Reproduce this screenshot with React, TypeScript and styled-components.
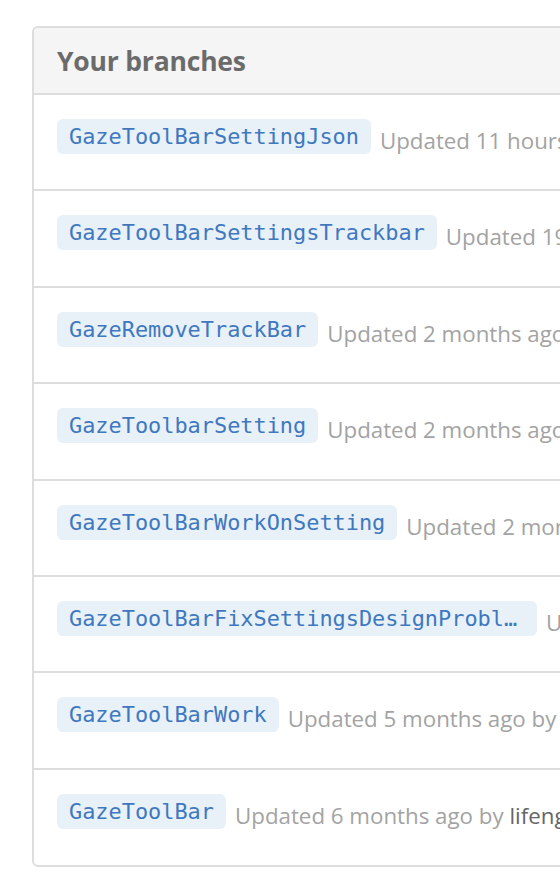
import React from "react";
import styled, { createGlobalStyle } from "styled-components";

const Global = createGlobalStyle`
  html, body { margin: 0; padding: 0; background: #fff; overflow: hidden; }
  body { font-family: "Open Sans", "Noto Sans", sans-serif; }
`;

const Page = styled.div`
  padding: 26px 0 0 32px;
  width: 1200px;
`;

const Box = styled.div`
  width: 1100px;
  border: 2px solid #dddddd;
  border-radius: 6px;
  overflow: hidden;
`;

const Header = styled.div`
  height: 65px;
  background: #f5f5f5;
  border-bottom: 2px solid #dddddd;
  display: flex;
  align-items: center;
  padding-left: 23px;
`;

const Title = styled.h3`
  margin: 0;
  font-family: "Open Sans", "Noto Sans", sans-serif;
  font-weight: 700;
  font-size: 26.5px;
  color: #6b6b6b;
  letter-spacing: -0.2px;
`;

const Row = styled.div<{ $last?: boolean }>`
  height: ${(p) => (p.$last ? "95.5px" : "96.4px")};
  box-sizing: border-box;
  padding: 24px 0 0 23px;
  border-bottom: ${(p) => (p.$last ? "none" : "2px solid #dddddd")};
  display: flex;
  align-items: flex-start;
  white-space: nowrap;
`;

const Branch = styled.span`
  display: inline-block;
  height: 35px;
  line-height: 35px;
  padding: 0 12px;
  border-radius: 6px;
  background: #e8f1f8;
  color: #4078c0;
  font-family: "DejaVu Sans Mono", "Liberation Mono", monospace;
  font-size: 21.9px;
  max-width: 456px;
  overflow: hidden;
  text-overflow: ellipsis;
  box-sizing: content-box;
`;

const Meta = styled.span`
  margin-left: 9px;
  line-height: 44px;
  font-family: "Open Sans", "Noto Sans", sans-serif;
  font-size: 22.3px;
  color: #a3a3a3;
`;

const Author = styled.span`
  color: #666666;
`;

const branches = [
  { name: "GazeToolBarSettingJson", meta: "Updated 11 hours ago by", author: "lifeng" },
  { name: "GazeToolBarSettingsTrackbar", meta: "Updated 19 days ago by", author: "lifeng" },
  { name: "GazeRemoveTrackBar", meta: "Updated 2 months ago by", author: "lifeng" },
  { name: "GazeToolbarSetting", meta: "Updated 2 months ago by", author: "lifeng" },
  { name: "GazeToolBarWorkOnSetting", meta: "Updated 2 months ago by", author: "lifeng" },
  { name: "GazeToolBarFixSettingsDesignProblem", meta: "Updated 3 months ago by", author: "lifeng" },
  { name: "GazeToolBarWork", meta: "Updated 5 months ago by", author: "lifeng" },
  { name: "GazeToolBar", meta: "Updated 6 months ago by", author: "lifeng" },
];

export default function App() {
  return (
    <Page>
      <Global />
      <Box>
        <Header>
          <Title>Your branches</Title>
        </Header>
        {branches.map((b, i) => (
          <Row key={b.name} $last={i === branches.length - 1}>
            <Branch>{b.name}</Branch>
            <Meta>
              {b.meta} <Author>{b.author}</Author>
            </Meta>
          </Row>
        ))}
      </Box>
    </Page>
  );
}
